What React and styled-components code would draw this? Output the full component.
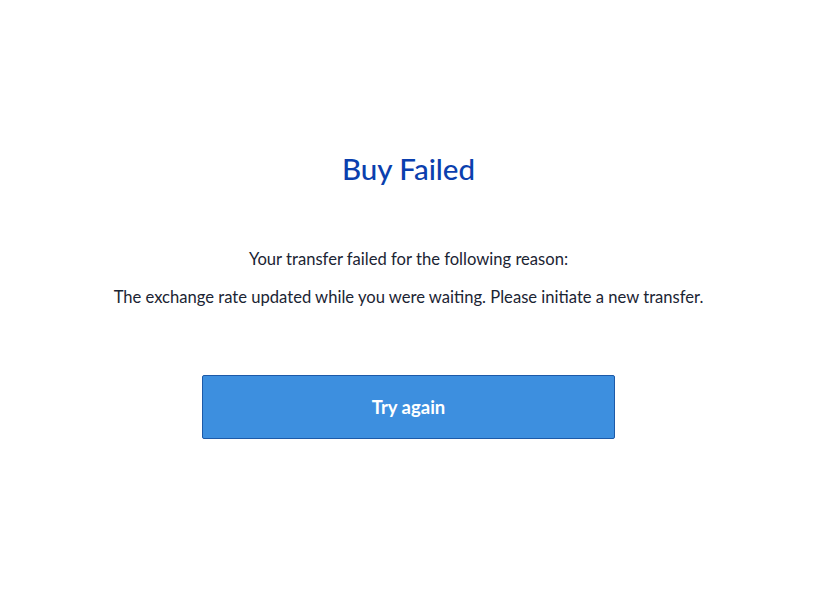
import React from "react";
import styled, { createGlobalStyle } from "styled-components";

const Global = createGlobalStyle`
  html, body {
    margin: 0;
    padding: 0;
    background: #ffffff;
  }
  body {
    font-family: "Lato", "Noto Sans", sans-serif;
  }
`;

const Page = styled.div`
  width: 817px;
  height: 613px;
  display: flex;
  flex-direction: column;
  align-items: center;
  box-sizing: border-box;
  padding-top: 150px;
`;

const Title = styled.h1`
  margin: 0;
  font-size: 29.5px;
  font-weight: 500;
  color: #0b3fae;
  line-height: 38px;
`;

const Message = styled.p`
  margin: 0;
  margin-top: ${(p) => p.$top}px;
  font-size: 16.6px;
  color: #1b2433;
  line-height: 20px;
  text-align: center;
`;

const Button = styled.button`
  margin-top: 68px;
  width: 413px;
  height: 64px;
  background: #3d8fdf;
  border: 1px solid #1d5aa8;
  border-radius: 2px;
  color: #ffffff;
  font-family: inherit;
  font-size: 18.5px;
  font-weight: 700;
  cursor: pointer;
`;

export default function App() {
  return (
    <>
      <Global />
      <Page>
        <Title>Buy Failed</Title>
        <Message $top={61}>Your transfer failed for the following reason:</Message>
        <Message $top={18}>
          The exchange rate updated while you were waiting. Please initiate a new transfer.
        </Message>
        <Button>Try again</Button>
      </Page>
    </>
  );
}
